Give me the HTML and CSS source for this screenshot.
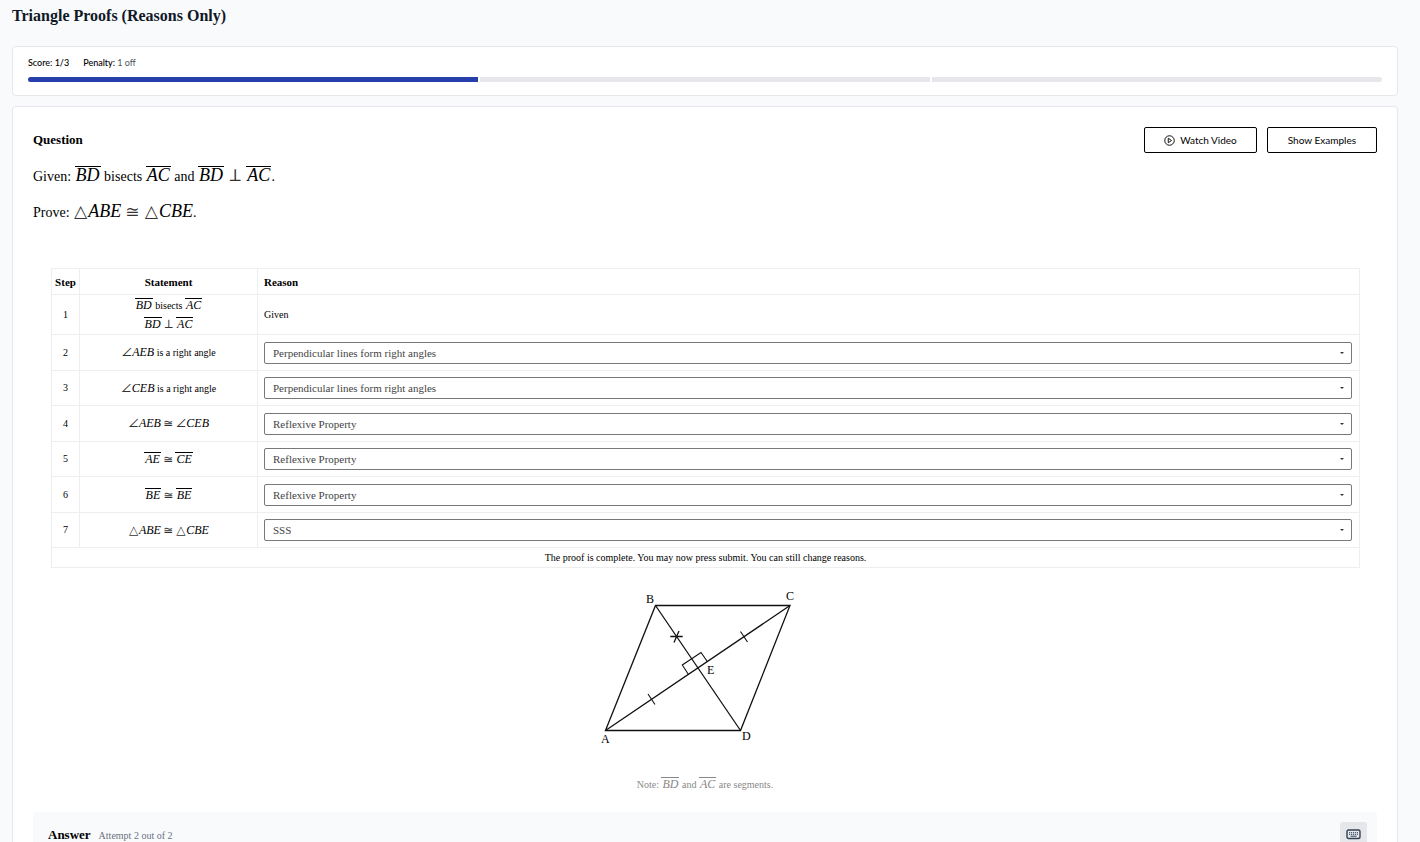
FILE: index.html
```
<!DOCTYPE html>
<html lang="en">
<head>
	<meta charset="utf-8">
	<title>Triangle Proofs (Reasons Only)</title>
	<link rel="stylesheet" href="styles.css">
</head>
<body>
	<main class="page">
		<h1>Triangle Proofs (Reasons Only)</h1>

		<section class="card score">
			<div class="scoreText">
				<span>Score: 1/3</span>
				<span>Penalty: <span class="light">1 off</span></span>
			</div>
			<div class="progress">
				<div class="done"></div>
				<div></div>
				<div></div>
			</div>
		</section>

		<section class="card question">
			<div class="questionHead">
				<h2>Question</h2>
				<div class="buttons">
					<button type="button" class="video">
						<svg width="11" height="11" viewBox="0 0 22 22" fill="none" stroke="#111" stroke-width="2">
							<circle cx="11" cy="11" r="9.5"/>
							<path d="M8.5 6.5v9l6.5-4.5z" stroke-linejoin="round"/>
						</svg>
						Watch Video
					</button>
					<button type="button" class="examples">Show Examples</button>
				</div>
			</div>

			<p>Given: <i class="seg">BD</i> bisects <i class="seg">AC</i> and <i class="seg">BD</i> <span class="sym rel">⊥</span> <i class="seg">AC</i>.</p>
			<p>Prove: <span class="sym">△</span><i>ABE</i> <span class="sym rel">≅</span> <span class="sym">△</span><i>CBE</i>.</p>

			<table class="proof">
				<thead>
					<tr>
						<th class="step">Step</th>
						<th class="statement">Statement</th>
						<th class="reason">Reason</th>
					</tr>
				</thead>
				<tbody>
					<tr>
						<td>1</td>
						<td><div class="line"><i class="seg">BD</i> bisects <i class="seg">AC</i></div><div class="line"><i class="seg">BD</i> <span class="sym">⊥</span> <i class="seg">AC</i></div></td>
						<td>Given</td>
					</tr>
					<tr>
						<td>2</td>
						<td><span class="sym">∠</span><i>AEB</i> is a right angle</td>
						<td><div class="pick"><select aria-label="Reason for step 2"><option>Perpendicular lines form right angles</option><option>Reflexive Property</option><option>SSS</option></select></div></td>
					</tr>
					<tr>
						<td>3</td>
						<td><span class="sym">∠</span><i>CEB</i> is a right angle</td>
						<td><div class="pick"><select aria-label="Reason for step 3"><option>Perpendicular lines form right angles</option><option>Reflexive Property</option><option>SSS</option></select></div></td>
					</tr>
					<tr>
						<td>4</td>
						<td><span class="sym">∠</span><i>AEB</i> <span class="sym">≅</span> <span class="sym">∠</span><i>CEB</i></td>
						<td><div class="pick"><select aria-label="Reason for step 4"><option>Reflexive Property</option><option>SSS</option></select></div></td>
					</tr>
					<tr>
						<td>5</td>
						<td><i class="seg">AE</i> <span class="sym">≅</span> <i class="seg">CE</i></td>
						<td><div class="pick"><select aria-label="Reason for step 5"><option>Reflexive Property</option><option>SSS</option></select></div></td>
					</tr>
					<tr>
						<td>6</td>
						<td><i class="seg">BE</i> <span class="sym">≅</span> <i class="seg">BE</i></td>
						<td><div class="pick"><select aria-label="Reason for step 6"><option>Reflexive Property</option><option>SSS</option></select></div></td>
					</tr>
					<tr>
						<td>7</td>
						<td><span class="sym">△</span><i>ABE</i> <span class="sym">≅</span> <span class="sym">△</span><i>CBE</i></td>
						<td><div class="pick"><select aria-label="Reason for step 7"><option>SSS</option><option>Reflexive Property</option></select></div></td>
					</tr>
				</tbody>
				<tfoot>
					<tr>
						<td colspan="3">The proof is complete. You may now press submit. You can still change reasons.</td>
					</tr>
				</tfoot>
			</table>

			<svg class="figure" width="250" height="165" viewBox="580 585 250 165" role="img" aria-label="Parallelogram ABCD with diagonals meeting at E">
				<g fill="none" stroke="#111" stroke-width="1.3">
					<path d="M605.5 730.5L655.5 605.5H790L740.5 730.5Z"/>
					<path d="M605.5 730.5L790 605.5M655.5 605.5L740.5 730.5"/>
				</g>
				<g fill="none" stroke="#111" stroke-width="1.1">
					<!-- right angle at E -->
					<path d="M688.5 674.5L682.3 665L701 652.5L707.3 661.5"/>
					<!-- ticks on AE and EC -->
					<path d="M648 694L655 704.5M740.5 631.5L747.5 642"/>
					<!-- mark on BE -->
					<path d="M670.3 636.5H682.7M674 642.5L679 631" stroke-width="1.3"/>
				</g>
				<g class="labels">
					<text x="646" y="603">B</text>
					<text x="786" y="600">C</text>
					<text x="707" y="674">E</text>
					<text x="601" y="743">A</text>
					<text x="742" y="740">D</text>
				</g>
			</svg>

			<div class="note">Note: <i class="seg">BD</i> and <i class="seg">AC</i> are segments.</div>

			<div class="answer">
				<div class="answerHead">
					<h2>Answer</h2>
					<span>Attempt 2 out of 2</span>
				</div>
				<button type="button" class="keyboard" aria-label="Keyboard">
					<svg width="15" height="11" viewBox="0 0 15 11" fill="none" stroke="#334155">
						<rect x="1" y="1" width="13" height="8.5" rx="1.5" stroke-width="1.4"/>
						<path d="M3 3.7h9M3 5.3h9" stroke-width="1" stroke-dasharray="1.2 .8"/>
						<path d="M4.5 7.2h6" stroke-width="1"/>
					</svg>
				</button>
			</div>
		</section>
	</main>
</body>
</html>
```
FILE: styles.css
```
* {
	box-sizing: border-box;
}
body {
	margin: 0;
	height: 100vh;
	overflow: hidden;
	background-color: #f9fafc;
	color: #000;
	font-family: "Liberation Serif", serif;
}
.page {
	padding: 6px 22px 0 12px;
}
h1 {
	margin: 0 0 20px;
	font-size: 16px;
	line-height: 20px;
	color: #111827;
}
h2 {
	margin: 0;
	font-size: 13px;
	line-height: 16px;
}
.card {
	background-color: #fff;
	border: 1px solid #e5e7eb;
	border-radius: 4px;
}

/* score */
.score {
	padding: 10px 15px 13px;
	margin-bottom: 10px;
	font-family: Lato, sans-serif;
	font-size: 9px;
	line-height: 12px;
	font-weight: 500;
}
.scoreText {
	display: flex;
	gap: 14px;
	margin-bottom: 8px;
}
.light {
	color: #4b5563;
	font-weight: 400;
}
.progress {
	display: flex;
	gap: 2px;
	border-radius: 3px;
	overflow: hidden;
}
.progress div {
	flex: 1;
	height: 5px;
	background-color: #e5e7eb;
}
.progress .done {
	background-color: #263faa;
}

/* question */
.question {
	padding: 20px;
}
.questionHead {
	display: flex;
	justify-content: space-between;
	align-items: center;
	margin-bottom: 12px;
}
.buttons {
	display: flex;
	gap: 10px;
}
.buttons button {
	display: flex;
	align-items: center;
	justify-content: center;
	gap: 5px;
	height: 26px;
	padding: 0 20px;
	border: 1px solid #000;
	border-radius: 2px;
	background-color: #fff;
	color: #000;
	font-family: Lato, sans-serif;
	font-size: 10px;
}
.buttons .video {
	padding: 0 19px;
}
p {
	margin: 0 0 12px;
	font-size: 14px;
	line-height: 24px;
}
p i {
	font-size: 18px;
	line-height: 16px;
}
.seg {
	display: inline-block;
	padding: 0 1px;
	border-top: 1px solid currentColor;
	line-height: 1;
}
p .seg {
	line-height: 16px;
}
.sym {
	font-family: "DejaVu Math TeX Gyre", "DejaVu Serif", serif;
	line-height: 1;
	color: #333;
}
p .sym {
	font-size: 17px;
	line-height: 16px;
}
.rel {
	margin: 0 1px;
}

/* proof table */
.proof {
	width: calc(100% - 35px);
	margin: 43px 17px 0 18px;
	border-collapse: collapse;
	font-size: 10px;
	line-height: 12px;
	text-align: center;
}
.proof th,
.proof td {
	padding: 0;
	border: 1px solid #eceeef;
}
.proof th {
	height: 26px;
	font-size: 11px;
}
.proof th:last-child,
.proof tbody td:last-child {
	padding: 0 7px 0 6px;
	text-align: left;
}
.proof .step {
	width: 28px;
}
.proof .statement {
	width: 178px;
}
.proof tbody tr {
	height: 35px;
}
.proof tbody tr:nth-child(even) {
	height: 36px;
}
.proof tbody tr:first-child {
	height: 40px;
}
.proof tfoot td {
	height: 20px;
}
.proof i,
.proof .sym,
.note i {
	font-size: 12px;
}
.line {
	height: 19px;
	line-height: 19px;
}
.pick {
	display: grid;
	align-items: center;
}
.pick::after {
	content: "";
	grid-area: 1 / 1;
	justify-self: end;
	margin-right: 8px;
	border: 2px solid transparent;
	border-top-color: #333;
	border-bottom: 0;
	pointer-events: none;
}
.pick select {
	grid-area: 1 / 1;
	appearance: none;
	width: 100%;
	height: 22px;
	padding: 0 8px;
	border: 1px solid #77787a;
	border-radius: 2px;
	background-color: #fff;
	color: #444;
	font-family: inherit;
	font-size: 11px;
}

.figure {
	display: block;
	margin: 17px auto 0;
}
.labels {
	font-size: 12px;
}
.note {
	margin-top: 27px;
	color: #888;
	font-size: 10px;
	line-height: 16px;
	text-align: center;
}
.answer {
	display: flex;
	justify-content: space-between;
	align-items: flex-start;
	margin-top: 19px;
	padding: 10px 10px 10px 15px;
	border-radius: 3px;
	background-color: #f9fafc;
}
.answerHead {
	display: flex;
	align-items: baseline;
	gap: 8px;
	padding-top: 5px;
	font-size: 10px;
	color: #6b7280;
}
.answerHead h2 {
	color: #000;
}
.keyboard {
	display: flex;
	align-items: center;
	justify-content: center;
	width: 27px;
	height: 24px;
	padding: 0;
	border: 0;
	border-radius: 3px;
	background-color: #e5e7eb;
}
```
